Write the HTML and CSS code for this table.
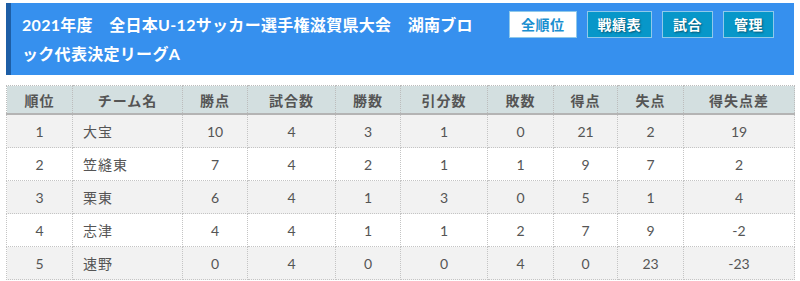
FILE: index.html
```html
<!DOCTYPE html>
<html lang="ja">
<head>
<meta charset="utf-8">
<link rel="stylesheet" href="styles.css">
</head>
<body>
<div class="page">
  <header class="banner">
    <h1 class="title">2021年度　全日本U-12サッカー選手権滋賀県大会　湖南ブロック代表決定リーグA</h1>
    <nav class="nav">
      <a class="btn btn-active">全順位</a>
      <a class="btn">戦績表</a>
      <a class="btn">試合</a>
      <a class="btn">管理</a>
    </nav>
  </header>
  <table class="standings">
    <colgroup>
      <col class="c1"><col class="c2"><col class="c3"><col class="c4"><col class="c5">
      <col class="c6"><col class="c7"><col class="c8"><col class="c9"><col class="c10">
    </colgroup>
    <thead>
      <tr><th>順位</th><th>チーム名</th><th>勝点</th><th>試合数</th><th>勝数</th><th>引分数</th><th>敗数</th><th>得点</th><th>失点</th><th>得失点差</th></tr>
    </thead>
    <tbody>
      <tr><td>1</td><td class="team">大宝</td><td>10</td><td>4</td><td>3</td><td>1</td><td>0</td><td>21</td><td>2</td><td>19</td></tr>
      <tr><td>2</td><td class="team">笠縫東</td><td>7</td><td>4</td><td>2</td><td>1</td><td>1</td><td>9</td><td>7</td><td>2</td></tr>
      <tr><td>3</td><td class="team">栗東</td><td>6</td><td>4</td><td>1</td><td>3</td><td>0</td><td>5</td><td>1</td><td>4</td></tr>
      <tr><td>4</td><td class="team">志津</td><td>4</td><td>4</td><td>1</td><td>1</td><td>2</td><td>7</td><td>9</td><td>-2</td></tr>
      <tr><td>5</td><td class="team">速野</td><td>0</td><td>4</td><td>0</td><td>0</td><td>4</td><td>0</td><td>23</td><td>-23</td></tr>
    </tbody>
  </table>
</div>
</body>
</html>
```
FILE: styles.css
```css
html, body {
  margin: 0;
  padding: 0;
  background: #fff;
}
body {
  font-family: "Lato", "Noto Sans CJK JP", sans-serif;
}
.page {
  padding: 3px 6px 0 6px;
}
.banner {
  display: flex;
  justify-content: space-between;
  align-items: flex-start;
  height: 72px;
  box-sizing: border-box;
  background: #3690ee;
  border-left: 5px solid #1d5ea6;
  padding: 7px 20px 0 11px;
}
.title {
  flex: 0 0 458px;
  margin: 0;
  color: #fff;
  font-size: 16px;
  font-weight: bold;
  line-height: 29px;
  letter-spacing: 0.3px;
  line-break: loose;
}
.nav {
  flex: 0 0 auto;
  display: flex;
  gap: 10px;
  margin-top: 1px;
}
.btn {
  display: block;
  white-space: nowrap;
  height: 27px;
  box-sizing: border-box;
  padding: 0 10px;
  line-height: 25px;
  font-size: 14px;
  font-weight: bold;
  color: #fff;
  background: #0797c9;
  border: 1px solid #8fc9ea;
  text-shadow: 1px 1px 2px rgba(0,0,0,0.45);
  letter-spacing: 0.5px;
}
.btn-active {
  background: #fff;
  color: #1a8fd0;
  text-shadow: none;
  padding: 0 11px;
}
.standings {
  margin-top: 10px;
  width: 788px;
  border-collapse: collapse;
  table-layout: fixed;
  font-size: 14px;
  color: #555;
}
.c1 { width: 66px; }
.c2 { width: 110px; }
.c3 { width: 65px; }
.c4 { width: 88px; }
.c5 { width: 65px; }
.c6 { width: 87px; }
.c7 { width: 66px; }
.c8 { width: 64px; }
.c9 { width: 66px; }
.c10 { width: 111px; }
.standings th {
  height: 27px;
  padding: 0;
  background: #d3dfe0;
  color: #555;
  font-weight: bold;
  letter-spacing: 1px;
  border: 1px dotted #bcbcbc;
  border-bottom: 2px solid #b4b4b4;
  text-align: center;
}
.standings td {
  height: 32px;
  padding: 0;
  text-align: center;
  border: 1px dotted #c4c4c4;
}
.standings tbody tr:nth-child(odd) td {
  background: #f2f2f2;
}
.standings td.team {
  text-align: left;
  padding-left: 10px;
  letter-spacing: 1px;
}
```
